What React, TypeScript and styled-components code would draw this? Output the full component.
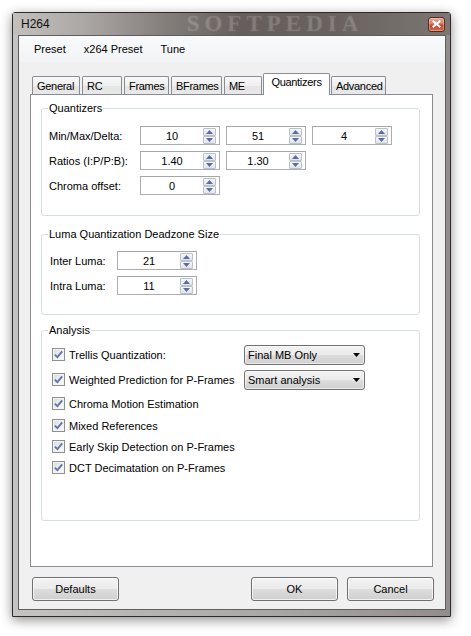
import React from 'react';
import styled, { createGlobalStyle } from 'styled-components';

const GlobalStyle = createGlobalStyle`
  html, body {
    margin: 0;
    padding: 0;
    background: #ffffff;
  }
  body {
    font-family: 'Liberation Sans', Arial, sans-serif;
    font-size: 11px;
    color: #000000;
  }
  * {
    box-sizing: border-box;
  }
`;

const tabs = [
  { label: 'General', width: 48 },
  { label: 'RC', width: 40 },
  { label: 'Frames', width: 45 },
  { label: 'BFrames', width: 51 },
  { label: 'ME', width: 38 },
  { label: 'Quantizers', width: 67, active: true },
  { label: 'Advanced', width: 55 },
];

const checks = [
  { label: 'Trellis Quantization:', combo: 'Final MB Only', h: 25 },
  { label: 'Weighted Prediction for P-Frames', combo: 'Smart analysis', h: 25 },
  { label: 'Chroma Motion Estimation', h: 23 },
  { label: 'Mixed References', h: 21 },
  { label: 'Early Skip Detection on P-Frames', h: 21 },
  { label: 'DCT Decimatation on P-Frames', h: 21 },
];

function SpinBox({ value }: { value: string }) {
  return (
    <SpinField>
      <SpinValue>{value}</SpinValue>
      <SpinButtons>
        <SpinButton>
          <svg width="7" height="4" viewBox="0 0 7 4">
            <path d="M0 4 L3.5 0 L7 4 Z" fill="#5b6d9c" />
          </svg>
        </SpinButton>
        <SpinButton>
          <svg width="7" height="4" viewBox="0 0 7 4">
            <path d="M0 0 L7 0 L3.5 4 Z" fill="#5b6d9c" />
          </svg>
        </SpinButton>
      </SpinButtons>
    </SpinField>
  );
}

function App() {
  return (
    <Page>
      <GlobalStyle />
      <Window>
        <TitleBar>
          <TitleText>H264</TitleText>
          <Watermark>SOFTPEDIA</Watermark>
          <CloseButton>
            <svg width="9" height="8" viewBox="0 0 9 8">
              <path d="M1.5 1.5 L7.5 6.5 M7.5 1.5 L1.5 6.5" stroke="#ffffff" strokeWidth="2" strokeLinecap="square" />
            </svg>
          </CloseButton>
        </TitleBar>
        <Frame>
          <Client>
            <MenuBar>
              <MenuItem>Preset</MenuItem>
              <MenuItem>x264 Preset</MenuItem>
              <MenuItem>Tune</MenuItem>
            </MenuBar>
            <Body>
              <TabBar>
                {tabs.map((t) => (
                  <Tab key={t.label} $width={t.width} $active={!!t.active}>
                    {t.label}
                  </Tab>
                ))}
              </TabBar>
              <Panel>
                <Group $h={114}>
                  <Legend>Quantizers</Legend>
                  <FieldGrid $labelWidth={85} $cols={3} $padTop={11} $padLeft={7}>
                    <FieldLabel>Min/Max/Delta:</FieldLabel>
                    <SpinBox value="10" />
                    <SpinBox value="51" />
                    <SpinBox value="4" />
                    <FieldLabel>Ratios (I:P/P:B):</FieldLabel>
                    <SpinBox value="1.40" />
                    <SpinBox value="1.30" />
                    <span />
                    <FieldLabel>Chroma offset:</FieldLabel>
                    <SpinBox value="0" />
                  </FieldGrid>
                </Group>
                <Group $h={87} $gap={12}>
                  <Legend>Luma Quantization Deadzone Size</Legend>
                  <FieldGrid $labelWidth={61} $cols={1} $padTop={10} $padLeft={8}>
                    <FieldLabel>Inter Luma:</FieldLabel>
                    <SpinBox value="21" />
                    <FieldLabel>Intra Luma:</FieldLabel>
                    <SpinBox value="11" />
                  </FieldGrid>
                </Group>
                <Group $h={197} $gap={9}>
                  <Legend>Analysis</Legend>
                  <CheckList>
                    {checks.map((c) => (
                      <CheckRow key={c.label} $h={c.h}>
                        <CheckBox>
                          <svg width="9" height="9" viewBox="0 0 9 9">
                            <path
                              d="M0.8 4.6 L3.4 7.2 L8.2 1.4"
                              fill="none"
                              stroke="#6476aa"
                              strokeWidth="1.9"
                            />
                          </svg>
                        </CheckBox>
                        <CheckLabel $fixed={!!c.combo}>{c.label}</CheckLabel>
                        {c.combo && (
                          <Combo>
                            <span>{c.combo}</span>
                            <svg width="7" height="4" viewBox="0 0 7 4">
                              <path d="M0 0 L7 0 L3.5 4 Z" fill="#000000" />
                            </svg>
                          </Combo>
                        )}
                      </CheckRow>
                    ))}
                  </CheckList>
                </Group>
              </Panel>
              <ButtonRow>
                <PushButton>Defaults</PushButton>
                <Spacer />
                <PushButton>OK</PushButton>
                <PushButton>Cancel</PushButton>
              </ButtonRow>
            </Body>
          </Client>
        </Frame>
      </Window>
    </Page>
  );
}

const Page = styled.div`
  width: 471px;
  height: 636px;
  padding: 12px 0 0 12px;
`;

const Window = styled.div`
  width: 439px;
  height: 605px;
  display: flex;
  flex-direction: column;
  border: 1px solid #2c2c2c;
  border-radius: 3px 3px 0 0;
  box-shadow: 0 3px 12px rgba(0, 0, 0, 0.45);
`;

const TitleBar = styled.div`
  height: 22px;
  flex: none;
  display: flex;
  align-items: center;
  padding: 0 5px 0 8px;
  background: linear-gradient(
    to right,
    #c2bfbd 0%,
    #aca8a6 16%,
    #86807d 34%,
    #655e5b 52%,
    #69625f 74%,
    #7c7774 100%
  );
`;

const TitleText = styled.span`
  font-size: 12px;
  color: #101010;
`;

const Watermark = styled.span`
  margin-left: 137px;
  height: 22px;
  font-family: 'Liberation Serif', serif;
  font-weight: bold;
  font-size: 23px;
  letter-spacing: 5px;
  line-height: 22px;
  color: rgba(255, 255, 255, 0.1);
  text-shadow: 0 0 2px rgba(255, 255, 255, 0.12);
`;

const CloseButton = styled.div`
  margin-left: auto;
  width: 17px;
  height: 15px;
  display: flex;
  align-items: center;
  justify-content: center;
  border: 1px solid #5a2a20;
  border-radius: 3px;
  background: linear-gradient(#e3a997 0%, #d37c66 45%, #c1462a 55%, #d06a4f 100%);
  box-shadow: inset 0 0 0 1px rgba(255, 220, 200, 0.4);
`;

const Frame = styled.div`
  flex: 1;
  display: flex;
  padding: 0 4px 6px 5px;
  background: linear-gradient(
    to right,
    #c6c4c3 0%,
    #b6b3b1 30%,
    #aaa6a4 60%,
    #928d8b 100%
  );
`;

const Client = styled.div`
  flex: 1;
  display: flex;
  flex-direction: column;
  border: 1px solid #5e5e5e;
  background: #f0f0f0;
`;

const MenuBar = styled.div`
  height: 26px;
  display: flex;
  align-items: center;
  padding-left: 6px;
  background: linear-gradient(#f9fafb, #f1f3f6);
`;

const MenuItem = styled.span`
  padding: 0 9px;
  line-height: 20px;
`;

const Body = styled.div`
  flex: 1;
  display: flex;
  flex-direction: column;
  padding: 11px 12px 0 11px;
`;

const TabBar = styled.div`
  height: 21px;
  display: flex;
  align-items: flex-end;
  gap: 2px;
  padding-left: 2px;
`;

const Tab = styled.div<{ $width: number; $active: boolean }>`
  position: relative;
  z-index: ${(p) => (p.$active ? 1 : 0)};
  width: ${(p) => p.$width}px;
  height: ${(p) => (p.$active ? 22 : 18)}px;
  margin: 0 ${(p) => (p.$active ? '-1px' : '0')} ${(p) => (p.$active ? '-1px' : '0')};
  padding: ${(p) => (p.$active ? '2px 0 0 0' : '3px 0 0 4px')};
  text-align: ${(p) => (p.$active ? 'center' : 'left')};
  line-height: 13px;
  letter-spacing: -0.3px;
  white-space: nowrap;
  overflow: hidden;
  border: 1px solid #898c95;
  border-bottom: none;
  border-radius: 2px 2px 0 0;
  background: ${(p) =>
    p.$active
      ? '#ffffff'
      : 'linear-gradient(#f8f8f8 0%, #efefef 50%, #e4e4e4 51%, #e8e8e8 100%)'};
`;

const Panel = styled.div`
  height: 473px;
  display: flex;
  flex-direction: column;
  padding: 7px 12px 0 10px;
  border: 1px solid #898c95;
  background: #ffffff;
`;

const Group = styled.fieldset<{ $h: number; $gap?: number }>`
  height: ${(p) => p.$h}px;
  min-width: 0;
  margin: ${(p) => p.$gap ?? 0}px 0 0 0;
  padding: 0;
  border: 1px solid #d5dfe5;
  border-radius: 3px;
`;

const Legend = styled.legend`
  margin-left: 6px;
  padding: 0 1px;
  line-height: 13px;
`;

const FieldGrid = styled.div<{
  $labelWidth: number;
  $cols: number;
  $padTop: number;
  $padLeft: number;
}>`
  display: grid;
  grid-template-columns: ${(p) => p.$labelWidth}px repeat(${(p) => p.$cols}, 80px);
  grid-auto-rows: 19px;
  column-gap: 6px;
  row-gap: 6px;
  align-items: center;
  padding: ${(p) => p.$padTop}px 0 0 ${(p) => p.$padLeft}px;
`;

const FieldLabel = styled.span`
  white-space: nowrap;
`;

const SpinField = styled.div`
  height: 19px;
  display: flex;
  align-items: center;
  padding-right: 3px;
  border: 1px solid #abadb3;
  border-top-color: #a4a6ad;
  background: #ffffff;
`;

const SpinValue = styled.span`
  flex: 1;
  text-align: center;
  padding-top: 1px;
`;

const SpinButtons = styled.div`
  width: 13px;
  display: flex;
  flex-direction: column;
`;

const SpinButton = styled.div`
  height: 8px;
  display: flex;
  align-items: center;
  justify-content: center;
  border: 1px solid #bcc0c8;
  border-radius: 1px;
  background: linear-gradient(#f6f7f9, #e0e4eb);
`;

const CheckList = styled.div`
  display: flex;
  flex-direction: column;
  padding: 5px 0 0 10px;
`;

const CheckRow = styled.div<{ $h: number }>`
  height: ${(p) => p.$h}px;
  display: flex;
  align-items: center;
  gap: 4px;
`;

const CheckBox = styled.div`
  width: 13px;
  height: 13px;
  flex: none;
  display: flex;
  align-items: center;
  justify-content: center;
  border: 1px solid #8e8f8f;
  background: linear-gradient(135deg, #d6d8dc 0%, #eef0f2 55%, #fbfbfb 100%);
  box-shadow: inset 0 0 0 1px #f4f4f4;
`;

const CheckLabel = styled.span<{ $fixed: boolean }>`
  width: ${(p) => (p.$fixed ? '171px' : 'auto')};
  white-space: nowrap;
`;

const Combo = styled.div`
  width: 121px;
  height: 20px;
  display: flex;
  align-items: center;
  justify-content: space-between;
  padding: 0 4px 0 3px;
  border: 1px solid #707070;
  border-radius: 3px;
  background: linear-gradient(#f2f2f2 0%, #ebebeb 50%, #dddddd 50%, #cfcfcf 100%);
  box-shadow: inset 0 0 0 1px rgba(255, 255, 255, 0.6);
`;

const ButtonRow = styled.div`
  display: flex;
  gap: 9px;
  margin: 10px -1px 0 2px;
`;

const Spacer = styled.div`
  flex: 1;
`;

const PushButton = styled.div`
  width: 87px;
  height: 24px;
  display: flex;
  align-items: center;
  justify-content: center;
  border: 1px solid #707070;
  border-radius: 3px;
  background: linear-gradient(#f2f2f2 0%, #ebebeb 50%, #dddddd 50%, #cfcfcf 100%);
  box-shadow: inset 0 0 0 1px rgba(255, 255, 255, 0.7);
`;

export default App;
